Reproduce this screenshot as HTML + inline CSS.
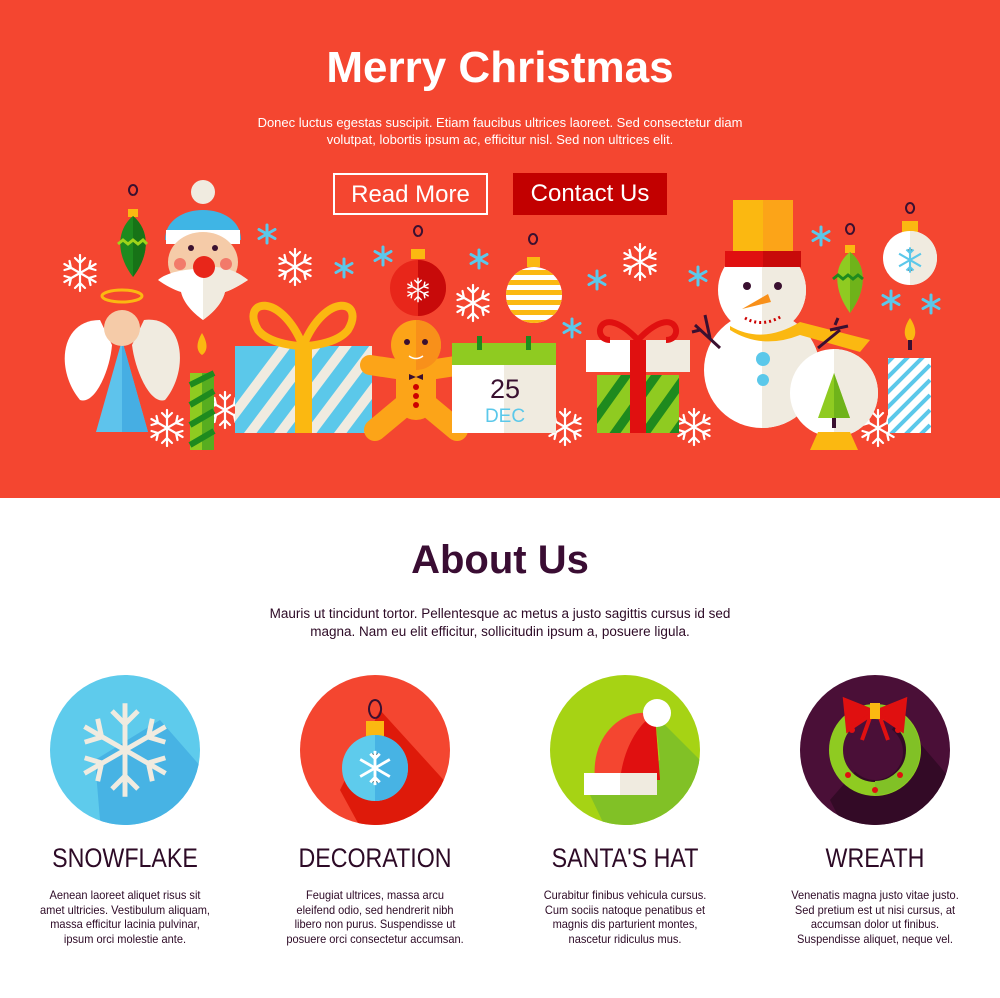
<!DOCTYPE html>
<html><head><meta charset="utf-8"><style>
body{margin:0;width:1000px;height:998px;background:#fff;font-family:"Liberation Sans",sans-serif;position:relative;overflow:hidden}
.hero{position:absolute;left:0;top:0;width:1000px;height:498px;background:#f44630}
.t{position:absolute;left:0;width:1000px;text-align:center}
.btn{position:absolute;top:173px;height:42px;line-height:40px;color:#fff;font-size:24px;text-align:center;box-sizing:border-box}
.col{position:absolute;width:250px;text-align:center;color:#2d0a26}
.col h3{margin:0;font-weight:normal;font-size:27px;transform:scaleX(.86);height:32px;line-height:32px}
.col p{margin:14px 0 0;font-size:12px;line-height:14.5px;transform:scaleX(.92)}
</style></head><body>
<div class="hero"></div>
<div class="t" style="top:42px;color:#fff;font-size:44px;font-weight:bold;line-height:52px">Merry Christmas</div>
<div class="t" style="top:114px;color:#fff;font-size:13px;line-height:17px">Donec luctus egestas suscipit. Etiam faucibus ultrices laoreet. Sed consectetur diam<br>volutpat, lobortis ipsum ac, efficitur nisl. Sed non ultrices elit.</div>
<div class="btn" style="left:333px;width:155px;border:2px solid #fff">Read More</div>
<div class="btn" style="left:513px;width:154px;background:#c20000;line-height:42px">Contact Us</div>

<svg width="1000" height="998" style="position:absolute;left:0;top:0" xmlns="http://www.w3.org/2000/svg">
<defs>
<g id="sf" stroke="#fff" stroke-width="2.2" fill="none" stroke-linecap="round">
<path d="M0-18V18M-15.6-9L15.6 9M-15.6 9L15.6-9M-5-15L0-10L5-15M-5 15L0 10L5 15M-15.5-3L-9-5L-10.5-12M15.5 3L9 5L10.5 12M-15.5 3L-9 5L-10.5 12M15.5-3L9-5L10.5-12"/>
</g>
<g id="st" stroke="#5bc8ea" stroke-width="3" stroke-linecap="round"><path d="M0-9V9M-8-4.5L8 4.5M-8 4.5L8-4.5"/></g>
</defs>
<use href="#sf" x="80" y="273"/><use href="#sf" x="295" y="267"/><use href="#sf" x="473" y="303"/>
<use href="#sf" x="640" y="262"/><use href="#sf" x="167" y="428"/><use href="#sf" x="565" y="427"/>
<use href="#sf" x="694" y="427"/><use href="#sf" x="878" y="428"/><use href="#sf" x="225" y="410"/>
<use href="#st" x="267" y="234"/><use href="#st" x="344" y="268"/><use href="#st" x="383" y="256"/>
<use href="#st" x="479" y="259"/><use href="#st" x="597" y="280"/><use href="#st" x="572" y="328"/>
<use href="#st" x="698" y="276"/><use href="#st" x="821" y="236"/><use href="#st" x="891" y="300"/><use href="#st" x="931" y="304"/>
<!-- green ornament left -->
<path d="M133 195a4 5 0 1 1 .1 0" fill="none" stroke="#3a1030" stroke-width="2"/>
<rect x="128" y="209" width="10" height="8" fill="#fbb811"/>
<path d="M133 216C150 230 150 255 133 277C116 255 116 230 133 216Z" fill="#1e8a1e"/>
<path d="M133 216C150 230 150 255 133 277Z" fill="#177317"/>
<path d="M118 244l5-4 5 4 5-4 5 4 5-4 4 4" stroke="#9fd41a" stroke-width="3" fill="none"/>
<!-- santa -->
<circle cx="203" cy="192" r="12" fill="#f0ebe0"/>
<path d="M165 240C165 200 241 200 241 240Z" fill="#3fb5e5"/>
<path d="M166 230h74v14h-74z" fill="#fff"/>
<ellipse cx="203" cy="262" rx="35" ry="30" fill="#f5cba8"/>
<path d="M158 280C175 265 230 265 248 280C240 285 232 290 225 292C222 305 210 315 203 320C196 315 184 305 181 292C174 290 165 285 158 280Z" fill="#fff"/>
<path d="M203 268V320C210 315 222 305 225 292C232 290 240 285 248 280C230 265 210 266 203 268Z" fill="#f0ebe0"/>
<circle cx="204" cy="267" r="11" fill="#e8261a"/>
<circle cx="191" cy="248" r="3" fill="#3a1030"/><circle cx="215" cy="248" r="3" fill="#3a1030"/>
<circle cx="180" cy="264" r="6" fill="#f27a6a"/><circle cx="226" cy="264" r="6" fill="#f27a6a"/>
<!-- angel -->
<ellipse cx="122" cy="296" rx="20" ry="6" fill="none" stroke="#fbb811" stroke-width="3"/>
<path d="M100 320C60 320 55 370 80 400C95 405 110 370 112 345Z" fill="#fff"/>
<path d="M144 320C184 315 190 370 165 400C150 405 135 370 132 345Z" fill="#f0ebe0"/>
<path d="M122 340L96 432H148Z" fill="#5ec3ec"/><path d="M122 340V432H148Z" fill="#46aee3"/>
<circle cx="122" cy="328" r="18" fill="#f5cba8"/>
<!-- candle left -->
<path d="M202 333c-6 10-6 18 0 22c6-4 6-12 0-22Z" fill="#fbb811"/>
<rect x="190" y="373" width="24" height="77" fill="#8fcb21"/><rect x="202" y="373" width="12" height="77" fill="#1f8f1f" opacity=".5"/>
<path d="M190 385l24-12M190 405l24-14M190 425l24-14M190 445l24-14" stroke="#1e8a1e" stroke-width="6"/>
<!-- blue gift -->
<clipPath id="g1"><rect x="235" y="346" width="137" height="87"/></clipPath>
<rect x="235" y="346" width="137" height="87" fill="#5bc8ea"/>
<g clip-path="url(#g1)" stroke="#f0ebe0" stroke-width="10"><path d="M200 460l90-120M230 460l90-120M260 460l90-120M290 460l90-120M320 460l90-120M350 460l90-120"/></g>
<rect x="295" y="346" width="17" height="87" fill="#fbb811"/>
<path d="M303 346C280 290 240 300 258 330C270 345 300 346 303 346Z M303 346C326 290 366 300 348 330C336 345 306 346 303 346Z" fill="none" stroke="#fbb811" stroke-width="8"/>
<!-- gingerbread -->
<g fill="#fca418" stroke="#fca418" stroke-linecap="round">
<circle cx="416" cy="345" r="25" stroke="none"/>
<path d="M416 372L370 365M416 372L462 365" stroke-width="20"/>
<path d="M416 375V400" stroke-width="40"/>
<path d="M405 405L375 430M427 405L457 430" stroke-width="22"/></g>
<path d="M416 320A25 25 0 0 1 416 370Z" fill="#f8901a"/>
<circle cx="407" cy="342" r="3" fill="#3a1030"/><circle cx="425" cy="342" r="3" fill="#3a1030"/>
<path d="M409 356Q416 361 423 356" stroke="#fff" stroke-width="1.5" fill="none"/>
<path d="M409 374l7 3 7-3v6l-7-3-7 3z" fill="#3a1030"/>
<circle cx="416" cy="387" r="3" fill="#c00"/><circle cx="416" cy="396" r="3" fill="#c00"/><circle cx="416" cy="405" r="3" fill="#c00"/>
<!-- red ornament -->
<path d="M418 236a4 5 0 1 1 .1 0" fill="none" stroke="#3a1030" stroke-width="2"/>
<rect x="411" y="249" width="14" height="10" fill="#fbb811"/>
<circle cx="418" cy="288" r="28" fill="#e8261a"/><path d="M418 260a28 28 0 0 1 0 56Z" fill="#c80a0a"/>
<g transform="translate(418 290) scale(.65)"><use href="#sf"/></g>
<!-- calendar -->
<rect x="452" y="343" width="104" height="90" fill="#f0ebe0"/><rect x="452" y="343" width="52" height="90" fill="#fff"/>
<rect x="452" y="343" width="104" height="22" fill="#8fcb21"/>
<rect x="477" y="336" width="5" height="14" fill="#1e8a1e"/><rect x="526" y="336" width="5" height="14" fill="#1e8a1e"/>
<text x="505" y="398" text-anchor="middle" font-size="27" fill="#3a1030" font-family="Liberation Sans">25</text>
<text x="505" y="422" text-anchor="middle" font-size="19" fill="#5bc8ea" font-family="Liberation Sans">DEC</text>
<!-- striped ornament -->
<path d="M533 244a4 5 0 1 1 .1 0" fill="none" stroke="#3a1030" stroke-width="2"/>
<rect x="527" y="257" width="13" height="10" fill="#fbb811"/>
<clipPath id="o2"><circle cx="534" cy="295" r="28"/></clipPath>
<circle cx="534" cy="295" r="28" fill="#fff"/>
<g clip-path="url(#o2)" fill="#fbb811"><rect x="500" y="270" width="70" height="5"/><rect x="500" y="280" width="70" height="5"/><rect x="500" y="290" width="70" height="5"/><rect x="500" y="300" width="70" height="5"/><rect x="500" y="310" width="70" height="5"/><rect x="500" y="320" width="70" height="5"/></g>
<!-- green gift -->
<clipPath id="g2"><rect x="597" y="375" width="82" height="58"/></clipPath>
<rect x="597" y="375" width="82" height="58" fill="#8fcb21"/>
<g clip-path="url(#g2)" stroke="#1e8a1e" stroke-width="9"><path d="M580 440l50-70M610 440l50-70M640 440l50-70M670 440l50-70"/></g>
<rect x="586" y="340" width="104" height="32" fill="#f0ebe0"/><rect x="586" y="340" width="52" height="32" fill="#fff"/>
<rect x="630" y="340" width="16" height="93" fill="#e01010"/>
<path d="M638 340C600 300 590 340 610 340M638 340C676 300 686 340 666 340" fill="none" stroke="#e01010" stroke-width="6"/>
<!-- snowman -->
<circle cx="762" cy="370" r="58" fill="#fff"/><path d="M762 312a58 58 0 0 1 0 116Z" fill="#f0ebe0"/>
<circle cx="762" cy="290" r="44" fill="#fff"/><path d="M762 246a44 44 0 0 1 0 88Z" fill="#f0ebe0"/>
<rect x="733" y="200" width="60" height="52" fill="#fca418"/><rect x="733" y="200" width="30" height="52" fill="#fbb811"/>
<rect x="725" y="251" width="76" height="16" fill="#c80a0a"/><rect x="725" y="251" width="38" height="16" fill="#e01010"/>
<circle cx="747" cy="286" r="4" fill="#3a1030"/><circle cx="778" cy="286" r="4" fill="#3a1030"/>
<path d="M742 309L768 294L771 302Z" fill="#f8901a"/>
<path d="M745 318Q762 328 782 316" fill="none" stroke="#c00" stroke-width="3" stroke-dasharray="2 3"/>
<path d="M730 326Q762 345 800 322L870 340L860 352L800 335Q762 350 730 330Z" fill="#fbb811"/>
<circle cx="763" cy="359" r="7" fill="#5bc8ea"/><circle cx="763" cy="380" r="6" fill="#5bc8ea"/>
<path d="M720 348L695 325M700 330L692 332M710 338L705 315M840 330L818 348M835 325L838 318M830 330L848 326" stroke="#3a1030" stroke-width="3"/>
<!-- green ornament right -->
<path d="M850 234a4 5 0 1 1 .1 0" fill="none" stroke="#3a1030" stroke-width="2"/>
<rect x="845" y="245" width="10" height="8" fill="#fbb811"/>
<path d="M850 252C867 265 867 290 850 313C833 290 833 265 850 252Z" fill="#8fcb21"/>
<path d="M850 252C867 265 867 290 850 313Z" fill="#6fb31a"/>
<path d="M833 279l5-4 5 4 5-4 5 4 5-4 5 4" stroke="#1e8a1e" stroke-width="3" fill="none"/>
<!-- white ornament -->
<path d="M910 213a4 5 0 1 1 .1 0" fill="none" stroke="#3a1030" stroke-width="2"/>
<rect x="902" y="221" width="16" height="12" fill="#fbb811"/>
<circle cx="910" cy="258" r="27" fill="#fff"/><path d="M910 231a27 27 0 0 1 0 54Z" fill="#f0ebe0"/>
<g transform="translate(910 260) scale(.7)"><path d="M0-18V18M-15.6-9L15.6 9M-15.6 9L15.6-9M-5-15L0-10L5-15M-5 15L0 10L5 15" stroke="#5bc8ea" stroke-width="3"/></g>
<!-- snow globe -->
<circle cx="834" cy="393" r="44" fill="#fff"/><path d="M834 349a44 44 0 0 1 0 88Z" fill="#f0ebe0"/>
<path d="M834 373L818 418H850Z" fill="#8fcb21"/><path d="M834 373V418H850Z" fill="#6fb31a"/>
<rect x="832" y="418" width="4" height="10" fill="#3a1030"/>
<path d="M810 450L818 432H850L858 450Z" fill="#fbb811"/>
<!-- candle right -->
<path d="M910 318c-7 10-7 20 0 24c7-4 7-14 0-24Z" fill="#fbb811"/><rect x="908" y="340" width="4" height="10" fill="#3a1030"/>
<clipPath id="c3"><rect x="888" y="358" width="43" height="75"/></clipPath>
<rect x="888" y="358" width="43" height="75" fill="#fff"/>
<g clip-path="url(#c3)" stroke="#5bc8ea" stroke-width="4"><path d="M870 380l60-60M870 395l60-60M870 410l60-60M870 425l60-60M870 440l60-60M870 455l60-60M870 470l60-60M870 485l60-60"/></g>

<!-- ABOUT icons -->
<clipPath id="k1"><circle cx="125" cy="750" r="75"/></clipPath>
<circle cx="125" cy="750" r="75" fill="#5ecbec"/>
<path d="M160 720L230 800L160 880L100 820L95 760Z" fill="#47b3e4" clip-path="url(#k1)"/>
<g transform="translate(125 750) scale(2.6)"><path d="M0-18V18M-15.6-9L15.6 9M-15.6 9L15.6-9M-5-15L0-10L5-15M-5 15L0 10L5 15M-15.5-3L-9-5L-10.5-12M15.5 3L9 5L10.5 12M-15.5 3L-9 5L-10.5 12M15.5-3L9-5L10.5-12" stroke="#f0ebe0" stroke-width="1.9" fill="none"/></g>

<clipPath id="k2"><circle cx="375" cy="750" r="75"/></clipPath>
<circle cx="375" cy="750" r="75" fill="#f44630"/>
<path d="M380 710L480 820L400 900L340 790Z" fill="#de1a0a" clip-path="url(#k2)"/>
<path d="M375 718a6 9 0 1 1 .1 0" fill="none" stroke="#3a1030" stroke-width="2"/>
<rect x="366" y="721" width="18" height="15" fill="#fbb811"/>
<ellipse cx="375" cy="768" rx="33" ry="33" fill="#5ecbec"/><path d="M375 735a33 33 0 0 1 0 66Z" fill="#47b3e4"/>
<g transform="translate(375 768) scale(.95)"><path d="M0-18V18M-15.6-9L15.6 9M-15.6 9L15.6-9M-5-15L0-10L5-15M-5 15L0 10L5 15" stroke="#fff" stroke-width="3"/></g>

<clipPath id="k3"><circle cx="625" cy="750" r="75"/></clipPath>
<circle cx="625" cy="750" r="75" fill="#a6d314"/>
<path d="M655 715L720 780L640 900L590 795L660 760Z" fill="#81c126" clip-path="url(#k3)"/>
<path d="M595 780C590 730 630 705 655 715L660 780Z" fill="#f44630"/>
<path d="M620 780C625 735 650 715 655 715L660 780Z" fill="#e01010"/>
<rect x="584" y="773" width="73" height="22" fill="#fff"/><rect x="620" y="773" width="37" height="22" fill="#f0ebe0"/>
<circle cx="657" cy="713" r="14" fill="#fff"/>

<clipPath id="k4"><circle cx="875" cy="750" r="75"/></clipPath>
<circle cx="875" cy="750" r="75" fill="#4a0f37"/>
<path d="M900 720L960 790L880 900L830 800Z" fill="#330a26" clip-path="url(#k4)"/>
<circle cx="875" cy="750" r="39" fill="none" stroke="#8fcb21" stroke-width="14"/>
<path d="M875 712a38 38 0 0 1 0 76" fill="none" stroke="#81c126" stroke-width="14"/>
<ellipse cx="875" cy="752" rx="28" ry="28" fill="#4a0f37"/>
<circle cx="852" cy="730" r="3" fill="#e01010"/><circle cx="898" cy="730" r="3" fill="#e01010"/><circle cx="848" cy="775" r="3" fill="#e01010"/><circle cx="875" cy="790" r="3" fill="#e01010"/><circle cx="900" cy="775" r="3" fill="#e01010"/>
<path d="M875 712L845 700L848 730Z M875 712L905 700L902 730Z M872 712L862 740 M878 712L888 740" fill="#e01010" stroke="#e01010" stroke-width="4"/>
<rect x="870" y="703" width="10" height="16" fill="#fbb811"/>
</svg>

<div class="t" style="top:536px;color:#3a0d33;font-size:40px;font-weight:bold;line-height:48px">About Us</div>
<div class="t" style="top:605px;color:#2d0a26;font-size:13.5px;line-height:18px">Mauris ut tincidunt tortor. Pellentesque ac metus a justo sagittis cursus id sed<br>magna. Nam eu elit efficitur, sollicitudin ipsum a, posuere ligula.</div>

<div class="col" style="left:0;top:842px"><h3>SNOWFLAKE</h3><p>Aenean laoreet aliquet risus sit<br>amet ultricies. Vestibulum aliquam,<br>massa efficitur lacinia pulvinar,<br>ipsum orci molestie ante.</p></div>
<div class="col" style="left:250px;top:842px"><h3>DECORATION</h3><p>Feugiat ultrices, massa arcu<br>eleifend odio, sed hendrerit nibh<br>libero non purus. Suspendisse ut<br>posuere orci consectetur accumsan.</p></div>
<div class="col" style="left:500px;top:842px"><h3>SANTA'S HAT</h3><p>Curabitur finibus vehicula cursus.<br>Cum sociis natoque penatibus et<br>magnis dis parturient montes,<br>nascetur ridiculus mus.</p></div>
<div class="col" style="left:750px;top:842px"><h3>WREATH</h3><p>Venenatis magna justo vitae justo.<br>Sed pretium est ut nisi cursus, at<br>accumsan dolor ut finibus.<br>Suspendisse aliquet, neque vel.</p></div>
</body></html>
